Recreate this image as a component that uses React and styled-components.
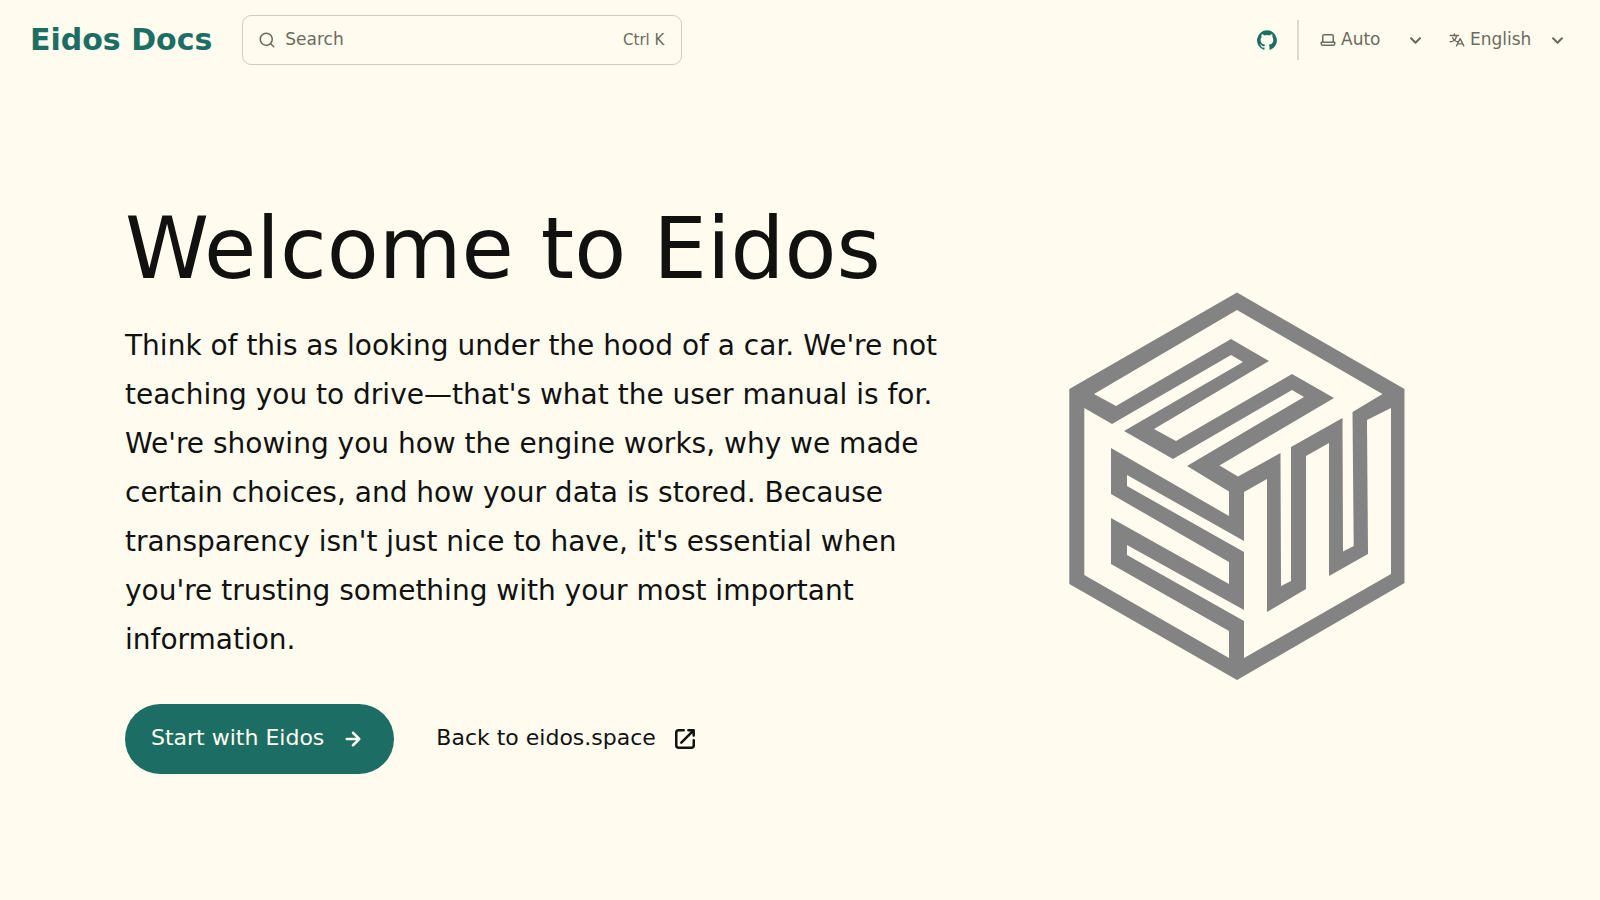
import React from 'react';
import styled, { createGlobalStyle } from 'styled-components';

const GlobalStyle = createGlobalStyle`
  *, *::before, *::after { box-sizing: border-box; }
  body {
    margin: 0;
    background: #fffcef;
    color: #11110f;
    font-family: 'DejaVu Sans', sans-serif;
    font-size: 18px;
  }
`;

const Header = styled.header`
  display: flex;
  align-items: center;
  gap: 30px;
  height: 80px;
  padding: 0 30px;
`;

const SiteTitle = styled.a`
  color: #1c6e64;
  font-size: 30px;
  font-weight: 700;
  line-height: 40px;
  text-decoration: none;
  white-space: nowrap;
`;

const SearchButton = styled.button`
  display: flex;
  align-items: center;
  gap: 9px;
  flex: 0 1 440px;
  height: 50px;
  padding: 0 17px 0 15px;
  border: 1px solid #cfcebf;
  border-radius: 9px;
  background: transparent;
  color: #6c6b5e;
  font: inherit;
  font-size: 17px;
  cursor: pointer;
`;

const Label = styled.span`
  padding-bottom: 3px;
`;

const Shortcut = styled.kbd`
  margin-left: auto;
  font-family: inherit;
  font-size: 15px;
`;

const HeaderTools = styled.div`
  display: flex;
  align-items: center;
  margin-left: auto;
`;

const SocialLink = styled.a`
  display: flex;
  align-items: center;
  height: 40px;
  padding-right: 20px;
  border-right: 2px solid #dad9cb;
  color: #1c6e64;
`;

const Picker = styled.label`
  display: flex;
  align-items: center;
  margin-left: 20px;
  color: #6c6b5e;
  & > svg:first-child { margin-right: 4px; }
`;

const Select = styled.select`
  appearance: none;
  width: ${(p) => p.$width};
  margin: 0 -25px 0 0;
  padding: 0 25px 3px 0;
  border: 0;
  background: transparent;
  color: inherit;
  font: inherit;
  font-size: 17px;
  line-height: 30px;
  cursor: pointer;
`;

const Icon = styled.svg`
  flex: none;
  width: ${(p) => p.$size}px;
  height: ${(p) => p.$size}px;
  fill: currentColor;
  pointer-events: none;
`;

const Hero = styled.main`
  display: grid;
  grid-template-columns: 7fr 4fr;
  column-gap: 3%;
  align-items: center;
  width: calc(100% - 60px);
  max-width: 1350px;
  margin: 0 auto;
  padding: 118px 0;
`;

const HeroCopy = styled.div`
  display: flex;
  flex-direction: column;
`;

const Title = styled.h1`
  margin: 0;
  font-size: 85px;
  font-weight: 400;
  line-height: 102px;
`;

const Tagline = styled.p`
  margin: 21px 0 40px;
  font-size: 28px;
  line-height: 49px;
`;

const Actions = styled.div`
  display: flex;
  flex-wrap: wrap;
  gap: 16px;
`;

const ActionLink = styled.a`
  display: flex;
  align-items: center;
  gap: 14px;
  height: 70px;
  padding: 0 26px;
  border-radius: 35px;
  background: ${(p) => (p.$primary ? '#1c6e64' : 'transparent')};
  color: ${(p) => (p.$primary ? '#fffcef' : '#11110f')};
  font-size: 22px;
  text-decoration: none;
  white-space: nowrap;
`;

const HeroImage = styled.svg`
  justify-self: center;
  width: 100%;
  max-width: 400px;
  fill: #838383;
`;

const icons = {
  search: 'M21.71 20.29 18 16.61A9 9 0 1 0 16.61 18l3.68 3.68a.999.999 0 0 0 1.42 0 1 1 0 0 0 0-1.39ZM11 18a7 7 0 1 1 0-14 7 7 0 0 1 0 14Z',
  github: 'M12 .3a12 12 0 0 0-3.8 23.38c.6.12.83-.26.83-.57L9 21.07c-3.34.72-4.04-1.61-4.04-1.61-.55-1.39-1.34-1.76-1.34-1.76-1.08-.74.09-.73.09-.73 1.2.09 1.83 1.24 1.83 1.24 1.08 1.83 2.81 1.3 3.5 1 .1-.78.42-1.31.76-1.61-2.67-.3-5.47-1.33-5.47-5.93 0-1.31.47-2.38 1.24-3.22-.14-.3-.54-1.52.1-3.18 0 0 1-.32 3.3 1.23a11.5 11.5 0 0 1 6 0c2.28-1.55 3.29-1.23 3.29-1.23.64 1.66.24 2.88.12 3.18a4.65 4.65 0 0 1 1.23 3.22c0 4.61-2.8 5.63-5.48 5.92.42.36.81 1.1.81 2.22l-.01 3.29c0 .31.2.69.82.57A12 12 0 0 0 12 .3Z',
  laptop: 'M21 14h-1V7a3 3 0 0 0-3-3H7a3 3 0 0 0-3 3v7H3a1 1 0 0 0-1 1v2a3 3 0 0 0 3 3h14a3 3 0 0 0 3-3v-2a1 1 0 0 0-1-1ZM6 7a1 1 0 0 1 1-1h10a1 1 0 0 1 1 1v7H6V7Zm14 10a1 1 0 0 1-1 1H5a1 1 0 0 1-1-1v-1h16v1Z',
  translate: 'M8.516 3a.94.94 0 0 0-.941.94v1.15H2.94a.94.94 0 1 0 0 1.882h7.362a7.422 7.422 0 0 1-1.787 3.958 7.42 7.42 0 0 1-1.422-2.425.94.94 0 1 0-1.774.627 9.303 9.303 0 0 0 1.785 3.043 7.422 7.422 0 0 1-4.164 1.278.94.94 0 1 0 0 1.881 9.303 9.303 0 0 0 5.575-1.855 9.303 9.303 0 0 0 4.11 1.74l-.763 1.525a.968.968 0 0 0-.016.034l-1.385 2.77a.94.94 0 1 0 1.683.841l1.133-2.267h5.806l1.134 2.267a.94.94 0 0 0 1.683-.841l-1.385-2.769a.95.95 0 0 0-.018-.036l-3.476-6.951a.94.94 0 0 0-1.682 0l-1.82 3.639a7.423 7.423 0 0 1-3.593-1.256 9.303 9.303 0 0 0 2.27-5.203h1.894a.94.94 0 0 0 0-1.881H9.456V3.94A.94.94 0 0 0 8.516 3Zm6.426 11.794a1.068 1.068 0 0 1-.02.039l-.703 1.407h3.924l-1.962-3.924-1.239 2.478Z',
  caret: 'M17 9.17a1 1 0 0 0-1.41 0L12 12.71 8.46 9.17a1 1 0 1 0-1.41 1.42l4.24 4.24a1.002 1.002 0 0 0 1.42 0L17 10.59a1.002 1.002 0 0 0 0-1.42Z',
  arrow: 'M17.92 11.62a1.001 1.001 0 0 0-.21-.33l-5-5a1.003 1.003 0 1 0-1.42 1.42l3.3 3.29H7a1 1 0 0 0 0 2h7.59l-3.3 3.29a1.002 1.002 0 0 0 .325 1.639 1 1 0 0 0 1.095-.219l5-5a1 1 0 0 0 .21-.33 1 1 0 0 0 0-.76Z',
  external: 'M19.33 10.18a1 1 0 0 1-.77 0 1 1 0 0 1-.62-.93l.01-1.83-8.2 8.2a1 1 0 0 1-1.41-1.42l8.2-8.2H14.7a1 1 0 0 1 0-2h4.25a1 1 0 0 1 1 1v4.25a1 1 0 0 1-.62.93ZM11 4a1 1 0 1 1 0 2H7a1 1 0 0 0-1 1v10a1 1 0 0 0 1 1h10a1 1 0 0 0 1-1v-4a1 1 0 1 1 2 0v4a3 3 0 0 1-3 3H7a3 3 0 0 1-3-3V7a3 3 0 0 1 3-3h4Z',
};

const Glyph = ({ name, size = 18 }) => (
  <Icon $size={size} viewBox="0 0 24 24" aria-hidden="true">
    <path fillRule="evenodd" d={icons[name]} />
  </Icon>
);

const cube = {
  outline: 'M200 6.500 367.500 103V297L200 394 32.300 298V103Z',
  top: 'M200 24 345.500 108 315.500 126 316.700 260 306 265.500 305.500 132 254 161 254 295 244 300 243.500 167 201 190.500 182.500 179.500 297 112 255 88 139 155 117 143 232 75 194 53 79 120 57 108Z',
  left: 'M47.300 122 75 138 194 69 206 76 87 145 136 173 255 104 267 111 150 180 192 205.500V230L74 162V208L192 276V298L74 232V278L192 345V372L47.300 289Z',
  right: 'M207 206 230 193V326L269 303V170L292 157V290L331 268 330 134 354 122V288L207 372V335L90 269V259L207 324V266L90 200V189L207 255Z',
};

export default function App() {
  return (
    <>
      <GlobalStyle />
      <Header>
        <SiteTitle href="#">Eidos Docs</SiteTitle>
        <SearchButton type="button">
          <Glyph name="search" />
          <Label>Search</Label>
          <Shortcut>Ctrl K</Shortcut>
        </SearchButton>
        <HeaderTools>
          <SocialLink href="#" aria-label="GitHub">
            <Glyph name="github" size={20} />
          </SocialLink>
          <Picker>
            <Glyph name="laptop" />
            <Select $width="87px" aria-label="Select theme" defaultValue="Auto">
              <option>Auto</option>
              <option>Dark</option>
              <option>Light</option>
            </Select>
            <Glyph name="caret" size={25} />
          </Picker>
          <Picker>
            <Glyph name="translate" />
            <Select $width="100px" aria-label="Select language" defaultValue="English">
              <option>English</option>
            </Select>
            <Glyph name="caret" size={25} />
          </Picker>
        </HeaderTools>
      </Header>
      <Hero>
        <HeroCopy>
          <Title>Welcome to Eidos</Title>
          <Tagline>
            Think of this as looking under the hood of a car. We're not teaching you to drive—that's
            what the user manual is for. We're showing you how the engine works, why we made certain
            choices, and how your data is stored. Because transparency isn't just nice to have, it's
            essential when you're trusting something with your most important information.
          </Tagline>
          <Actions>
            <ActionLink href="#" $primary>
              <Label>Start with Eidos</Label>
              <Glyph name="arrow" size={30} />
            </ActionLink>
            <ActionLink href="#">
              <Label>Back to eidos.space</Label>
              <Glyph name="external" size={30} />
            </ActionLink>
          </Actions>
        </HeroCopy>
        <HeroImage viewBox="0 0 400 400" role="img" aria-label="Eidos logo">
          <path fillRule="evenodd" d={Object.values(cube).join('')} />
        </HeroImage>
      </Hero>
    </>
  );
}
